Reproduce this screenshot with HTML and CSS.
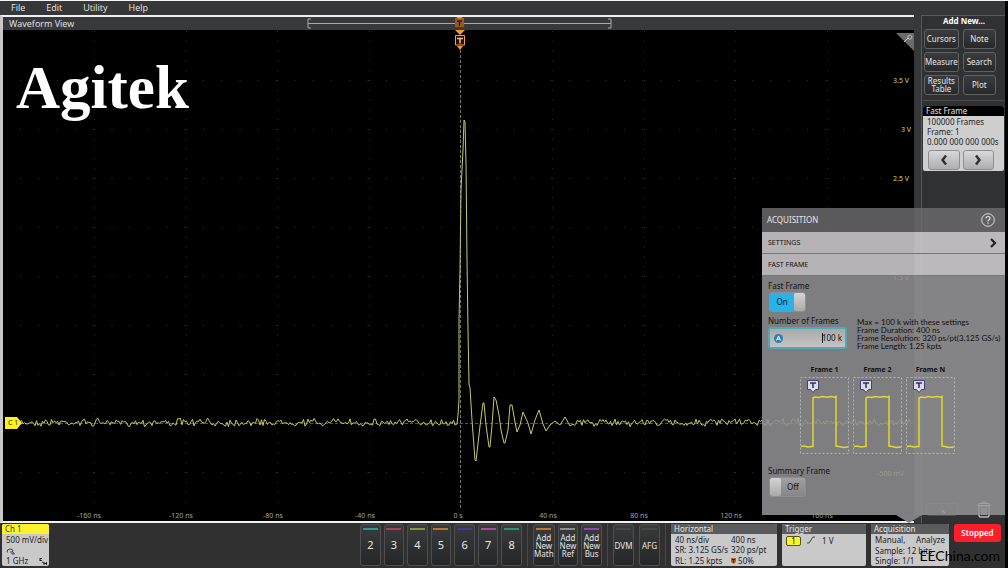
FILE: index.html
```html
<!DOCTYPE html>
<html lang="en">
<head>
    <meta charset="UTF-8">
    <meta name="viewport" content="width=device-width, initial-scale=1.0">
    <title>Waveform View</title>
    <link rel="stylesheet" href="styles.css">
</head>
<body>
    <div class="workspace">
        <div class="left">
            <nav class="menu">
                <button type="button">File</button>
                <button type="button">Edit</button>
                <button type="button">Utility</button>
                <button type="button">Help</button>
            </nav>

            <main class="view">
                <div class="view-header">
                    <h1>Waveform View</h1>
                    <svg class="range" viewBox="0 0 305 13" width="305" height="13">
                        <path d="M4 2H1v9h3M301 2h3v9h-3M1 6.5h303" stroke="#aaa" fill="none"/>
                        <path d="M148 1h9v9h-9z" fill="#9a5a1c"/>
                        <path d="M150 4h5M152.5 4v5" stroke="#222" stroke-width="1.5"/>
                        <path d="M149 0h7l-3.5 2z" fill="#f79433"/>
                    </svg>
                </div>
                <div class="plot">
                    <svg id="scope" viewBox="3 30 911 491" preserveAspectRatio="none">
                        <g id="grid" stroke="#343434" fill="none"></g>
                        <path d="M460.5 50V508" stroke="#77776f" stroke-dasharray="3 2"/>
                        <path d="M20 423.5H913" stroke="#55554a" stroke-dasharray="3 2"/>
                        <path id="wave" stroke="#c9c76a" fill="none"/>
                        <path d="M455 30h10l-5 5z" fill="#f79433"/>
                        <path d="M455.5 35.5h9v9.5h-9z" fill="#1c0d05" stroke="#f5a04a"/>
                        <path d="M457 46h6l-3 4z" fill="#f79433"/>
                        <path d="M457 38.5h6M460 38.5v5" stroke="#f7c08a" stroke-width="1.5"/>
                        <path d="M5 417h12l5 6-5 6H5z" fill="#fdf01e"/>
                        <text class="handle" x="8" y="425">C 1</text>
                        <path d="M896 33h18v18z" fill="#6b6b6b"/>
                        <path d="M904 42l4-4m0 0a2 2 0 1 1 1 1z" stroke="#ccc" fill="none"/>
                        <g class="volts">
                            <text x="909" y="83">3.5 V</text>
                            <text x="911" y="132">3 V</text>
                            <text x="909" y="181">2.5 V</text>
                            <text x="909" y="280">1.5 V</text>
                            <text x="904" y="476">-500 mV</text>
                        </g>
                        <g class="times">
                            <text x="89" y="518">-160 ns</text>
                            <text x="181" y="518">-120 ns</text>
                            <text x="273" y="518">-80 ns</text>
                            <text x="365" y="518">-40 ns</text>
                            <text x="458" y="518">0 s</text>
                            <text x="548" y="518">40 ns</text>
                            <text x="639" y="518">80 ns</text>
                            <text x="731" y="518">120 ns</text>
                            <text x="822" y="518">160 ns</text>
                        </g>
                    </svg>
                    <div class="brand">Agitek</div>
                </div>
            </main>
        </div>

        <aside class="sidebar">
            <div class="tools">
                <h2>Add New...</h2>
                <div class="tool-grid">
                    <button type="button">Cursors</button>
                    <button type="button">Note</button>
                    <button type="button">Measure</button>
                    <button type="button">Search</button>
                    <button type="button">Results Table</button>
                    <button type="button">Plot</button>
                </div>
                <section class="frame-card">
                    <h3>Fast Frame</h3>
                    <div class="frame-body">
                        <p>100000 Frames</p>
                        <p>Frame: 1</p>
                        <p>0.000 000 000 000s</p>
                        <div class="frame-nav">
                            <button type="button" aria-label="Previous frame">
                                <svg viewBox="0 0 10 12" width="10" height="12"><path d="M7 1.5L3.5 6 7 10.5" stroke="#333" stroke-width="2.5" fill="none"/></svg>
                            </button>
                            <button type="button" aria-label="Next frame">
                                <svg viewBox="0 0 10 12" width="10" height="12"><path d="M3 1.5L6.5 6 3 10.5" stroke="#333" stroke-width="2.5" fill="none"/></svg>
                            </button>
                        </div>
                    </div>
                </section>
                <div class="side-bottom">
                    <button type="button" class="zoom-btn" aria-label="Zoom">
                        <svg viewBox="0 0 10 10" width="10" height="10"><path d="M5 5l3 3" stroke="#ddd" stroke-width="1.5"/></svg>
                    </button>
                    <button type="button" class="trash-btn" aria-label="Delete">
                        <svg viewBox="0 0 14 17" width="14" height="17"><path d="M2 5h10v10q0 1-1 1H3q-1 0-1-1zM1 4.5q0-2 2-2h8q2 0 2 2zM5 2V1h4v1M5 7v7M7 7v7M9 7v7" stroke="#fff" fill="none"/></svg>
                    </button>
                </div>
            </div>
        </aside>
    </div>

    <footer class="settings-bar">
        <section class="badge channel">
            <h3>Ch 1</h3>
            <div class="badge-body">
                <p>500 mV/div</p>
                <svg viewBox="0 0 10 8" width="10" height="8"><path d="M1 5q0-3 3-3t3 2M1 5h1M4 5h1M6 4v3h2.5z" stroke="#444" fill="none"/></svg>
                <p class="split"><span>1 GHz</span>
                    <svg viewBox="0 0 8 7" width="8" height="7"><path d="M1 0v3M1 .5h2M1 2.500h2M3 4l2 1M5 4v3M5 5.5h3M7.5 4v3" stroke="#222" fill="none"/></svg>
                </p>
            </div>
        </section>

        <div class="channels">
            <button type="button" class="add teal">2</button>
            <button type="button" class="add red">3</button>
            <button type="button" class="add green">4</button>
            <button type="button" class="add orange">5</button>
            <button type="button" class="add blue">6</button>
            <button type="button" class="add pink">7</button>
            <button type="button" class="add mint">8</button>
        </div>
        <div class="adders">
            <button type="button" class="add small orange">Add New Math</button>
            <button type="button" class="add small grey">Add New Ref</button>
            <button type="button" class="add small purple">Add New Bus</button>
        </div>
        <div class="extras">
            <button type="button" class="add small">DVM</button>
            <button type="button" class="add small">AFG</button>
        </div>

        <section class="badge horizontal">
            <h3>Horizontal</h3>
            <div class="badge-body pairs">
                <span>40 ns/div</span><span>400 ns</span>
                <span>SR: 3.125 GS/s</span><span>320 ps/pt</span>
                <span>RL: 1.25 kpts</span>
                <span><svg viewBox="0 0 5 6" width="5" height="6"><path d="M0 0h5v4L2.5 6 0 4z" fill="#b5651d"/><path d="M1 1.5h3M2.5 1.5v3" stroke="#222"/></svg> 50%</span>
            </div>
        </section>
        <section class="badge trigger">
            <h3>Trigger</h3>
            <div class="badge-body source">
                <span class="source-tag">1</span>
                <svg viewBox="0 0 9 8" width="9" height="8"><path d="M0 7h2l4-6h2" stroke="#444" fill="none"/></svg>
                <span>1 V</span>
            </div>
        </section>
        <section class="badge acquisition">
            <h3>Acquisition</h3>
            <div class="badge-body">
                <p class="split"><span>Manual,</span><span>Analyze</span></p>
                <p>Sample: 12 bits</p>
                <p>Single: 1/1</p>
            </div>
        </section>
        <button type="button" class="run">Stopped</button>
        <div class="site">EEChina.com</div>
    </footer>

    <section class="dialog">
        <header class="dialog-header">
            <h2>ACQUISITION</h2>
            <button type="button" aria-label="Help">
                <svg viewBox="0 0 14 14" width="14" height="14"><circle cx="7" cy="7" r="6.3" stroke="#ddd" fill="none"/><path d="M5 5.5q0-2 2-2t2 1.8q0 1-1.2 1.7-.8.5-.8 1.5M7 9.5v1.3" stroke="#ddd" stroke-width="1.2" fill="none"/></svg>
            </button>
        </header>
        <button type="button" class="section-row">
            <span>SETTINGS</span>
            <svg viewBox="0 0 8 10" width="8" height="10"><path d="M2 1l4 4-4 4" stroke="#222" stroke-width="2.2" fill="none"/></svg>
        </button>
        <button type="button" class="section-row">FAST FRAME</button>

        <div class="dialog-body">
            <label for="fast">Fast Frame</label>
            <div class="switch on">
                <input type="checkbox" id="fast" checked>
                <span class="state">On</span><span class="knob"></span>
            </div>

            <div class="frames-row">
                <div class="frames-field">
                    <label for="frames">Number of Frames</label>
                    <div class="number">
                        <svg viewBox="0 0 9 9" width="9" height="9"><circle cx="4.5" cy="4.5" r="4.5" fill="#2f7fb5"/><path d="M2.5 6.5l2-4.5 2 4.5M3.2 5.2h2.6" stroke="#fff" fill="none"/></svg>
                        <input type="text" id="frames" value="100 k">
                        <span class="caret"></span>
                    </div>
                </div>
                <div class="info">
                    <p>Max = 100 k with these settings</p>
                    <p>Frame Duration: 400 ns</p>
                    <p>Frame Resolution: 320 ps/pt(3.125 GS/s)</p>
                    <p>Frame Length: 1.25 kpts</p>
                </div>
            </div>

            <div class="diagram">
                <figure>
                    <figcaption>Frame 1</figcaption>
                    <svg viewBox="0 0 49 77" width="49" height="77"><use href="#pulse"/></svg>
                </figure>
                <figure>
                    <figcaption>Frame 2</figcaption>
                    <svg viewBox="0 0 49 77" width="49" height="77"><use href="#pulse"/></svg>
                </figure>
                <figure>
                    <figcaption>Frame N</figcaption>
                    <svg viewBox="0 0 49 77" width="49" height="77"><use href="#pulse"/></svg>
                </figure>
            </div>

            <label for="summary">Summary Frame</label>
            <div class="switch">
                <input type="checkbox" id="summary">
                <span class="knob"></span><span class="state">Off</span>
            </div>
        </div>
    </section>

    <svg class="defs" width="0" height="0">
        <symbol id="pulse" viewBox="0 0 49 77">
            <path d="M.5.5h48v76H.5z" stroke="#b4b4b4" stroke-dasharray="2 2" fill="none"/>
            <path d="M1 69.5l3-.5 4 1 4-.5h1V21l2-1 4 .5 3-1 5 .8 4-.8 4 .7 1-.7V69l3 .5 4 1 5-.5" stroke="#e0d82c" stroke-width="1.5" fill="none"/>
            <path d="M7.5 3.5h11v9h-3l-2.5 3-2.5-3h-3z" fill="#dcdae8" stroke="#45406e"/>
            <path d="M10 6h6M13 6v5" stroke="#34304f" stroke-width="1.5"/>
        </symbol>
    </svg>

    <script>
        // graticule dots
        let grid = '';
        for (let y = 80; y < 500; y += 49) {
            grid += '<path d="M20 ' + (y + 0.5) + 'H913" stroke-dasharray="1 17.3"/>';
        }
        for (let i = 0; i < 9; i++) {
            const x = Math.round(94 + i * 91.6) + 0.5;
            grid += '<path d="M' + x + ' 31V505" stroke-dasharray="1 8.8"/>';
        }
        document.getElementById('grid').innerHTML = grid;

        // seeded noise so the trace is the same on every load
        let seed = 7;
        function noise(size) {
            seed = (seed * 16807) % 2147483647;
            return (seed / 2147483647 - 0.5) * size;
        }

        const pulse = [
            [457, 424], [458, 415], [459, 400], [459, 320], [460, 270], [461, 190], [463, 150],
            [464, 120], [465, 122], [466, 163], [467, 260], [468, 330], [469, 384], [470, 388], [472, 420],
            [475, 460], [476, 461], [480, 426], [483, 403], [484, 403], [486, 425], [489, 447], [490, 447],
            [492, 425], [494, 397], [496, 400], [499, 415], [501, 430], [504, 443], [505, 443],
            [508, 430], [510, 405], [512, 405], [515, 422], [517, 432], [520, 425], [523, 412],
            [528, 423], [531, 434], [535, 420], [539, 410], [543, 424], [546, 431], [550, 425],
            [555, 421], [560, 425], [565, 417], [570, 426]
        ];
        const points = [];
        for (let x = 20; x < 456; x += 1.5) {
            points.push([x, 422.5 + noise(5) + noise(4)]);
        }
        points.push(...pulse);
        for (let x = 573; x < 912; x += 1.5) {
            points.push([x, 422.5 + noise(5) + noise(4)]);
        }
        document.getElementById('wave').setAttribute('d', 'M' + points.join('L'));
    </script>
</body>
</html>
```
FILE: styles.css
```css
* {
    box-sizing: border-box;
}

body {
    background-color: #000;
    color: #e6e6e6;
    font-family: "Noto Sans", "Open Sans", sans-serif;
    font-size: 8px;
    line-height: 10px;
    margin: 0;
    padding-right: 3px;
    min-height: 100vh;
    display: flex;
    flex-direction: column;
    position: relative;
    border-top: 1px solid #f4f4f4;
}

h1, h2, h3, p, figure {
    margin: 0;
    font-size: inherit;
    font-weight: normal;
}

button, input {
    font: inherit;
    color: inherit;
    border: none;
    padding: 0;
    margin: 0;
    background: none;
}

svg {
    display: block;
}

.workspace {
    flex: 1;
    display: flex;
    background-color: #363738;
}

.left {
    flex: 1;
    display: flex;
    flex-direction: column;
}

.menu {
    height: 14px;
    display: flex;
    align-items: center;
    gap: 21px;
    padding-left: 11px;
    font-family: "Open Sans", "Noto Sans", sans-serif;
    font-size: 9px;
}

/* waveform view */
.view {
    flex: 1;
    display: flex;
    flex-direction: column;
    border-top: 2px solid #f0f0f0;
    border-bottom: 2px solid #f0f0f0;
    border-left: 3px solid #c8c8c8;
}

.view-header {
    height: 13px;
    display: grid;
    grid-template-columns: 1fr auto 1fr;
    align-items: center;
    background-color: #38393a;
    padding: 0 4px 0 6px;
}

.view-header h1 {
    font-family: "Open Sans", "Noto Sans", sans-serif;
    font-size: 9px;
}

.plot {
    flex: 1;
    position: relative;
    background-color: #000;
}

#scope {
    position: absolute;
    width: 100%;
    height: 100%;
}

#scope text {
    font-size: 7px;
    fill: #a0a0a0;
}

#scope .volts text {
    fill: #d4d870;
    text-anchor: end;
}

#scope .times text {
    text-anchor: middle;
}

#scope .handle {
    fill: #333;
}

.brand {
    position: absolute;
    left: 13px;
    top: 27px;
    color: #fff;
    font: bold 61px/61px "Liberation Serif", serif;
}

/* right column */
.sidebar {
    width: 91px;
    display: flex;
    padding: 14px 0 0 7px;
}

.tools {
    flex: 1;
    display: flex;
    flex-direction: column;
    border-left: 1px solid #58595a;
    border-top: 1px solid #58595a;
    background-color: #303132;
    padding-left: 1px;
}

.tools h2 {
    text-align: center;
    font-weight: bold;
    font-size: 8px;
    color: #fff;
}

.tool-grid {
    display: grid;
    grid-template-columns: 1fr 1fr;
    gap: 3px 4px;
    padding: 3px 9px 5px 1px;
    border-bottom: 1px solid #4d4d4e;
}

.tool-grid button {
    height: 20px;
    border: 1px solid #606162;
    border-radius: 3px;
    background: linear-gradient(#3a3b3c, #28292a);
    line-height: 8px;
}

.frame-card {
    margin-top: 5px;
    margin-right: 1px;
    border-radius: 2px;
    overflow: hidden;
    background-color: #cfcfd0;
    color: #222;
}

.frame-card h3 {
    background-color: #000;
    color: #e6e6e6;
    padding-left: 3px;
}

.frame-body {
    padding: 1px 4px;
}

.frame-nav {
    display: flex;
    gap: 3px;
    padding: 3px 6px 0 1px;
}

.frame-nav button {
    flex: 1;
    height: 20px;
    display: flex;
    align-items: center;
    justify-content: center;
    border: 1px solid #8e8e90;
    border-radius: 3px;
    background: linear-gradient(#d8d8da, #aeaeb0);
}

.side-bottom {
    margin-top: auto;
    display: flex;
    align-items: center;
    justify-content: space-between;
    padding: 0 14px 5px 3px;
}

.zoom-btn {
    width: 32px;
    height: 13px;
    display: flex;
    align-items: center;
    justify-content: center;
    border: 1px solid #505050;
    border-radius: 3px;
}

/* bottom bar */
.settings-bar {
    height: 45px;
    display: flex;
    position: relative;
    padding: 1px 4px 2px 2px;
    background-color: #303031;
}

.badge {
    display: flex;
    flex-direction: column;
    border-radius: 2px;
    overflow: hidden;
    background-color: #c9c9ca;
    color: #1c1c1c;
    margin-right: 5px;
    white-space: nowrap;
}

.badge h3 {
    background-color: #5a5b5c;
    color: #e6e6e6;
    padding-left: 3px;
}

.badge-body {
    flex: 1;
    display: flex;
    flex-direction: column;
    justify-content: space-between;
    padding: 1px 4px 0;
}

.split {
    display: flex;
    justify-content: space-between;
    align-items: center;
}

.channel {
    width: 47px;
    margin-right: auto;
}

.channel h3 {
    background-color: #fdf32b;
    color: #333;
}

.channel .badge-body {
    padding: 1px 2px 0 4px;
}

.channels, .adders, .extras {
    display: grid;
    grid-auto-flow: column;
    grid-auto-columns: 1fr;
    gap: 3px;
    padding-right: 5px;
    margin-right: 5px;
    border-right: 1px solid #4a4a4b;
}

.channels {
    width: 168px;
}

.adders {
    width: 75px;
}

.extras {
    width: 53px;
    gap: 5px;
}

.add {
    border: 1px solid #4e4f50;
    border-radius: 3px;
    background: linear-gradient(#3a3b3c, #252627);
    font-size: 11px;
    display: flex;
    flex-direction: column;
    align-items: center;
}

.add::before {
    content: "";
    width: 15px;
    height: 2px;
    margin: 3px 0 10px;
    background-color: #454647;
}

.add.small {
    font-size: 8px;
    line-height: 8px;
}

.extras .add::before {
    margin-bottom: 12px;
}

.adders .add::before {
    margin-bottom: 4px;
}

.add.teal::before { background-color: #2b9a97; }
.add.red::before { background-color: #a83f5c; }
.add.green::before { background-color: #7c9c3c; }
.add.orange::before { background-color: #bd7430; }
.add.blue::before { background-color: #3b3aa0; }
.add.pink::before { background-color: #a8499c; }
.add.mint::before { background-color: #27936f; }
.add.grey::before { background-color: #8c8c8c; }
.add.purple::before { background-color: #9443b8; }

.horizontal {
    width: 106px;
}

.pairs {
    display: grid;
    grid-template-columns: 56px 1fr;
}

.pairs svg {
    display: inline-block;
}

.trigger {
    width: 84px;
}

.source {
    flex-direction: row;
    justify-content: flex-start;
    align-items: flex-start;
    gap: 6px;
    padding-top: 2px;
}

.source-tag {
    width: 15px;
    line-height: 8px;
    text-align: center;
    background-color: #fdf32b;
    border: 1px solid #55531c;
    border-radius: 2px;
}

.acquisition {
    width: 78px;
}

.run {
    width: 47px;
    height: 18px;
    border-radius: 3px;
    background-color: #fb1f2b;
    color: #fff;
    font-weight: 600;
}

.site {
    position: absolute;
    right: 5px;
    bottom: 3px;
    color: #000;
    font-family: Lato, "Noto Sans", sans-serif;
    font-size: 14px;
    line-height: 18px;
}

/* acquisition dialog, see-through over the plot */
.dialog {
    position: absolute;
    right: 3px;
    bottom: 53px;
    width: 243px;
    color: #111;
}

.dialog::after {
    content: "";
    position: absolute;
    left: 134px;
    top: 100%;
    border: 13px solid transparent;
    border-top: 8px solid #807f81;
    border-bottom: 0;
}

.dialog-header {
    height: 24px;
    display: flex;
    align-items: center;
    justify-content: space-between;
    padding: 0 10px 0 5px;
    background-color: rgba(106, 105, 107, 0.85);
    color: #e6e6e6;
}

.section-row {
    width: 100%;
    height: 22px;
    display: flex;
    align-items: center;
    justify-content: space-between;
    padding: 0 8px 0 6px;
    font-size: 7px;
    background-color: rgba(208, 206, 209, 0.87);
    border-bottom: 1px solid #777;
}

.dialog-body {
    padding: 5px 4px 17px 6px;
    background-color: rgba(145, 144, 146, 0.87);
}

.dialog-body label {
    display: block;
}

.switch {
    position: relative;
    display: flex;
    width: 37px;
    height: 20px;
    margin: 1px;
    border: 1px solid #8f8f90;
    border-radius: 3px;
    overflow: hidden;
    background: linear-gradient(#a0a0a1, #858586);
}

.switch input {
    position: absolute;
    width: 100%;
    height: 100%;
    opacity: 0;
}

.switch .state {
    flex: 1;
    line-height: 18px;
    text-align: center;
}

.switch.on .state {
    background-color: #27b3ea;
}

.switch .knob {
    width: 11px;
    border-radius: 2px;
    background: linear-gradient(#d4d4d5, #aaa);
}

.frames-row {
    display: flex;
    gap: 10px;
    margin-top: 4px;
}

.frames-field {
    width: 79px;
}

.number {
    position: relative;
    display: flex;
    align-items: center;
    height: 22px;
    margin-top: 1px;
    padding: 0 3px 0 4px;
    border: 2px solid #4fa9b8;
    border-radius: 3px;
    background: linear-gradient(#a9a9aa, #c4c4c5);
}

.number input {
    flex: 1;
    min-width: 0;
    text-align: right;
}

.caret {
    position: absolute;
    right: 22px;
    width: 1px;
    height: 10px;
    background-color: #111;
}

.info {
    font-family: Lato, "Noto Sans", sans-serif;
    line-height: 8px;
    white-space: nowrap;
    padding-top: 2px;
}

.diagram {
    display: flex;
    gap: 4px;
    justify-content: center;
    margin: 15px 14px 12px 0;
}

figcaption {
    text-align: center;
    font-size: 7px;
    font-weight: bold;
    margin-bottom: 2px;
}

.defs {
    position: absolute;
}
```
